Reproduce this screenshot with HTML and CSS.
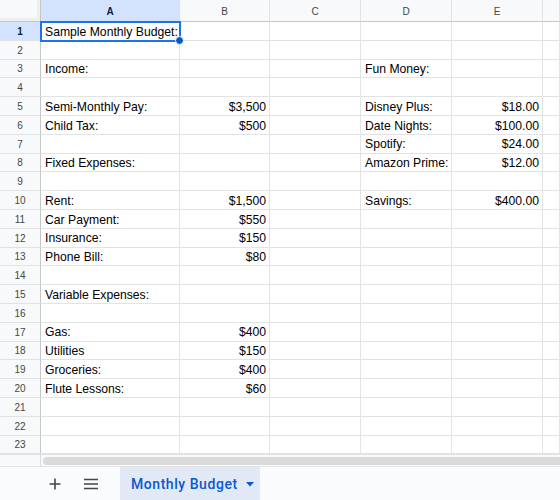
FILE: index.html
```html
<!DOCTYPE html>
<html lang="en">
<head>
<meta charset="utf-8">
<title>Monthly Budget</title>
<link rel="stylesheet" href="styles.css">
</head>
<body>
<div class="sheet">
  <div class="grid">
    <div class="row head">
      <div class="corner"></div>
      <div class="colh sel">A</div>
      <div class="colh">B</div>
      <div class="colh">C</div>
      <div class="colh">D</div>
      <div class="colh">E</div>
      <div class="colh"></div>
    </div>
    <div class="row"><div class="rowh sel">1</div><div class="c active">Sample Monthly Budget:<span class="handle"></span></div><div class="c"></div><div class="c"></div><div class="c"></div><div class="c"></div><div class="c"></div></div>
    <div class="row"><div class="rowh">2</div><div class="c"></div><div class="c"></div><div class="c"></div><div class="c"></div><div class="c"></div><div class="c"></div></div>
    <div class="row"><div class="rowh">3</div><div class="c">Income:</div><div class="c"></div><div class="c"></div><div class="c">Fun Money:</div><div class="c"></div><div class="c"></div></div>
    <div class="row"><div class="rowh">4</div><div class="c"></div><div class="c"></div><div class="c"></div><div class="c"></div><div class="c"></div><div class="c"></div></div>
    <div class="row"><div class="rowh">5</div><div class="c">Semi-Monthly Pay:</div><div class="c num">$3,500</div><div class="c"></div><div class="c">Disney Plus:</div><div class="c num">$18.00</div><div class="c"></div></div>
    <div class="row"><div class="rowh">6</div><div class="c">Child Tax:</div><div class="c num">$500</div><div class="c"></div><div class="c">Date Nights:</div><div class="c num">$100.00</div><div class="c"></div></div>
    <div class="row"><div class="rowh">7</div><div class="c"></div><div class="c"></div><div class="c"></div><div class="c">Spotify:</div><div class="c num">$24.00</div><div class="c"></div></div>
    <div class="row"><div class="rowh">8</div><div class="c">Fixed Expenses:</div><div class="c"></div><div class="c"></div><div class="c">Amazon Prime:</div><div class="c num">$12.00</div><div class="c"></div></div>
    <div class="row"><div class="rowh">9</div><div class="c"></div><div class="c"></div><div class="c"></div><div class="c"></div><div class="c"></div><div class="c"></div></div>
    <div class="row"><div class="rowh">10</div><div class="c">Rent:</div><div class="c num">$1,500</div><div class="c"></div><div class="c">Savings:</div><div class="c num">$400.00</div><div class="c"></div></div>
    <div class="row"><div class="rowh">11</div><div class="c">Car Payment:</div><div class="c num">$550</div><div class="c"></div><div class="c"></div><div class="c"></div><div class="c"></div></div>
    <div class="row"><div class="rowh">12</div><div class="c">Insurance:</div><div class="c num">$150</div><div class="c"></div><div class="c"></div><div class="c"></div><div class="c"></div></div>
    <div class="row"><div class="rowh">13</div><div class="c">Phone Bill:</div><div class="c num">$80</div><div class="c"></div><div class="c"></div><div class="c"></div><div class="c"></div></div>
    <div class="row"><div class="rowh">14</div><div class="c"></div><div class="c"></div><div class="c"></div><div class="c"></div><div class="c"></div><div class="c"></div></div>
    <div class="row"><div class="rowh">15</div><div class="c">Variable Expenses:</div><div class="c"></div><div class="c"></div><div class="c"></div><div class="c"></div><div class="c"></div></div>
    <div class="row"><div class="rowh">16</div><div class="c"></div><div class="c"></div><div class="c"></div><div class="c"></div><div class="c"></div><div class="c"></div></div>
    <div class="row"><div class="rowh">17</div><div class="c">Gas:</div><div class="c num">$400</div><div class="c"></div><div class="c"></div><div class="c"></div><div class="c"></div></div>
    <div class="row"><div class="rowh">18</div><div class="c">Utilities</div><div class="c num">$150</div><div class="c"></div><div class="c"></div><div class="c"></div><div class="c"></div></div>
    <div class="row"><div class="rowh">19</div><div class="c">Groceries:</div><div class="c num">$400</div><div class="c"></div><div class="c"></div><div class="c"></div><div class="c"></div></div>
    <div class="row"><div class="rowh">20</div><div class="c">Flute Lessons:</div><div class="c num">$60</div><div class="c"></div><div class="c"></div><div class="c"></div><div class="c"></div></div>
    <div class="row"><div class="rowh">21</div><div class="c"></div><div class="c"></div><div class="c"></div><div class="c"></div><div class="c"></div><div class="c"></div></div>
    <div class="row"><div class="rowh">22</div><div class="c"></div><div class="c"></div><div class="c"></div><div class="c"></div><div class="c"></div><div class="c"></div></div>
    <div class="row"><div class="rowh">23</div><div class="c"></div><div class="c"></div><div class="c"></div><div class="c"></div><div class="c"></div><div class="c"></div></div>
  </div>

  <div class="hscroll">
    <div class="hscroll-corner"></div>
    <div class="hscroll-track"><div class="thumb"></div></div>
  </div>

  <div class="tabbar">
    <button class="tool" aria-label="Add sheet">
      <svg width="14" height="14" viewBox="0 0 14 14"><path d="M7 1.5v11M1.5 7h11" stroke="#444746" stroke-width="1.6"/></svg>
    </button>
    <button class="tool" aria-label="All sheets">
      <svg width="16" height="12" viewBox="0 0 16 12"><path d="M1 1.5h14M1 6h14M1 10.5h14" stroke="#444746" stroke-width="1.6"/></svg>
    </button>
    <div class="tab">
      <span class="tab-name">Monthly Budget</span>
      <svg class="caret" width="8" height="5" viewBox="0 0 8 5"><path d="M0 0h8L4 4.5z" fill="#0b57d0"/></svg>
    </div>
  </div>
</div>
</body>
</html>
```

FILE: styles.css
```css
* { box-sizing: border-box; }

html, body {
  margin: 0;
  padding: 0;
  background: #ffffff;
}

body {
  width: 560px;
  height: 500px;
  overflow: hidden;
  font-family: Arial, "Liberation Sans", sans-serif;
}

.sheet {
  display: flex;
  flex-direction: column;
  height: 500px;
}

.grid {
  display: flex;
  flex-direction: column;
}

.row {
  display: grid;
  grid-template-columns: 41px 139px 90px 91px 91px 91px 1fr;
  height: 18.8px;
}

.row.head {
  height: 22px;
}

.corner {
  background: #f8f9fa;
  border-right: 1px solid #c4c7c5;
  border-bottom: 1px solid #c4c7c5;
  box-shadow: inset -3px -3px 0 #eceef0;
}

.colh {
  background: #f8f9fa;
  border-right: 1px solid #e0e2e3;
  border-bottom: 1px solid #c4c7c5;
  color: #444746;
  font-size: 10px;
  display: flex;
  align-items: center;
  justify-content: center;
  padding-top: 1px;
}

.colh.sel {
  background: #d3e3fd;
  color: #0b1f44;
  font-weight: bold;
}

.rowh {
  background: #f8f9fa;
  border-right: 1px solid #c4c7c5;
  border-bottom: 1px solid #e0e2e3;
  color: #444746;
  font-size: 10px;
  display: flex;
  align-items: center;
  justify-content: center;
  padding-top: 1px;
}

.rowh.sel {
  background: #d3e3fd;
  color: #0b1f44;
  font-weight: bold;
}

.c {
  position: relative;
  border-right: 1px solid #e2e3e3;
  border-bottom: 1px solid #e2e3e3;
  font-size: 12.2px;
  color: #000;
  padding: 0 3px 2px 4px;
  display: flex;
  align-items: flex-end;
  white-space: nowrap;
  line-height: 1;
}

.c.num {
  justify-content: flex-end;
}

/* selected cell outline and fill handle */
.c.active {
  outline: 2px solid #1a73e8;
  outline-offset: -1px;
  z-index: 1;
}

.handle {
  position: absolute;
  right: -5px;
  bottom: -5px;
  width: 9px;
  height: 9px;
  border-radius: 50%;
  background: #0b57d0;
  border: 1px solid #ffffff;
}

/* horizontal scrollbar strip */
.hscroll {
  display: grid;
  grid-template-columns: 41px 1fr;
  height: 13px;
  background: #f8f9fa;
  border-top: 1px solid #e0e2e3;
  border-bottom: 1px solid #e3e3e3;
}

.hscroll-corner {
  border-right: 1px solid #dadce0;
}

.hscroll-track {
  padding: 2px 0 2px 2px;
}

.thumb {
  height: 8px;
  background: #dadada;
  border-radius: 4px 0 0 4px;
}

/* sheet tabs */
.tabbar {
  flex: 1;
  display: flex;
  align-items: stretch;
  background: #f9fbfd;
  padding-left: 38px;
}

.tool {
  width: 34px;
  border: 0;
  background: transparent;
  padding: 0;
  display: flex;
  align-items: center;
  justify-content: center;
}

.tool + .tool {
  margin-left: 2px;
}

.tab {
  margin-left: 12px;
  width: 140px;
  background: #e1e9f7;
  display: flex;
  align-items: center;
  padding-left: 11px;
  gap: 8px;
}

.tab-name {
  color: #0b57d0;
  font-family: Roboto, "Liberation Sans", sans-serif;
  font-weight: 500;
  font-size: 14px;
  letter-spacing: 0.55px;
}

.caret {
  margin-top: 1px;
}
```
